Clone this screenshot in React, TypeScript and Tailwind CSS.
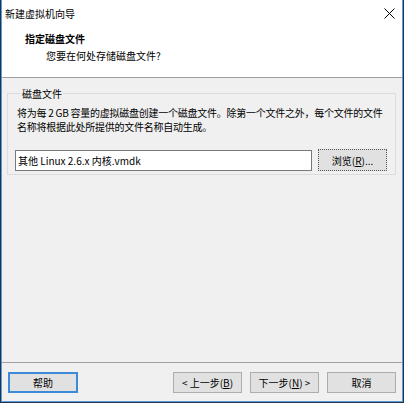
import React from "react";

const font = { fontFamily: '"Noto Sans CJK SC", "Microsoft YaHei", sans-serif' };

function Btn({ children, className = "" }: { children: React.ReactNode; className?: string }) {
  return (
    <div
      className={`flex h-[21px] w-[69px] items-center justify-center border border-[#adadad] bg-[#e1e1e1] text-[10px] leading-[13px] text-black ${className}`}
    >
      {children}
    </div>
  );
}

export default function App() {
  return (
    <div className="h-[403px] w-[404px] overflow-hidden bg-[#1f3550]" style={font}>
      <div className="ml-[1px] flex h-[402px] w-[402px] flex-col border border-t-0 border-[#5b9bd8] bg-[#f0f0f0] text-black">
        {/* title bar */}
        <div className="flex h-[26px] items-center justify-between bg-white pl-[3px] pr-[7px]">
          <span className="text-[10px] leading-[13px]">新建虚拟机向导</span>
          <svg width="11" height="11" viewBox="0 0 11 11">
            <path d="M0.5 0.5 L10.5 10.5 M10.5 0.5 L0.5 10.5" stroke="#000" strokeWidth="1" />
          </svg>
        </div>
        {/* header */}
        <div className="h-[52px] border-b border-[#a0a0a0] bg-white pt-[6px]">
          <div className="pl-[23px] text-[10px] font-bold leading-[13px]">指定磁盘文件</div>
          <div className="mt-[4px] pl-[44px] text-[10px] leading-[13px]">您要在何处存储磁盘文件?</div>
        </div>
        {/* body */}
        <div className="flex-1 border-b border-[#a0a0a0] pl-[5px] pr-[6px] pt-[9px]">
          <fieldset className="border border-[#dcdcdc] pb-[3px] pl-[7px] pr-[7px]">
            <legend className="ml-[6px] px-[1px] text-[10px] leading-[13px]">磁盘文件</legend>
            <div className="mt-[6px] pl-[2px] text-[10px] leading-[14px] tracking-[-0.25px]">
              <div className="whitespace-nowrap">将为每 2 GB 容量的虚拟磁盘创建一个磁盘文件。除第一个文件之外，每个文件的文件</div>
              <div className="whitespace-nowrap">名称将根据此处所提供的文件名称自动生成。</div>
            </div>
            <div className="mt-[15px] flex items-center gap-[6px]">
              <div className="flex h-[21px] w-[297px] items-center border border-[#7a7a7a] bg-white pl-[2px] text-[10px] leading-[13px]">
                其他 Linux 2.6.x 内核.vmdk
              </div>
              <div className="flex h-[22px] w-[69px] items-center justify-center border border-dotted border-[#555] bg-[#e1e1e1] text-[10px] leading-[13px]">
                浏览(<span className="underline">R</span>)...
              </div>
            </div>
          </fieldset>
        </div>
        {/* footer */}
        <div className="flex h-[38px] items-start justify-between pl-[6px] pr-[6px] pt-[9px]">
          <Btn className="!w-[70px] border-2 !border-[#3c8ad8]">帮助</Btn>
          <div className="flex gap-[8px]">
            <Btn>
              &lt; 上一步(<span className="underline">B</span>)
            </Btn>
            <Btn>
              下一步(<span className="underline">N</span>) &gt;
            </Btn>
            <Btn>取消</Btn>
          </div>
        </div>
      </div>
    </div>
  );
}
